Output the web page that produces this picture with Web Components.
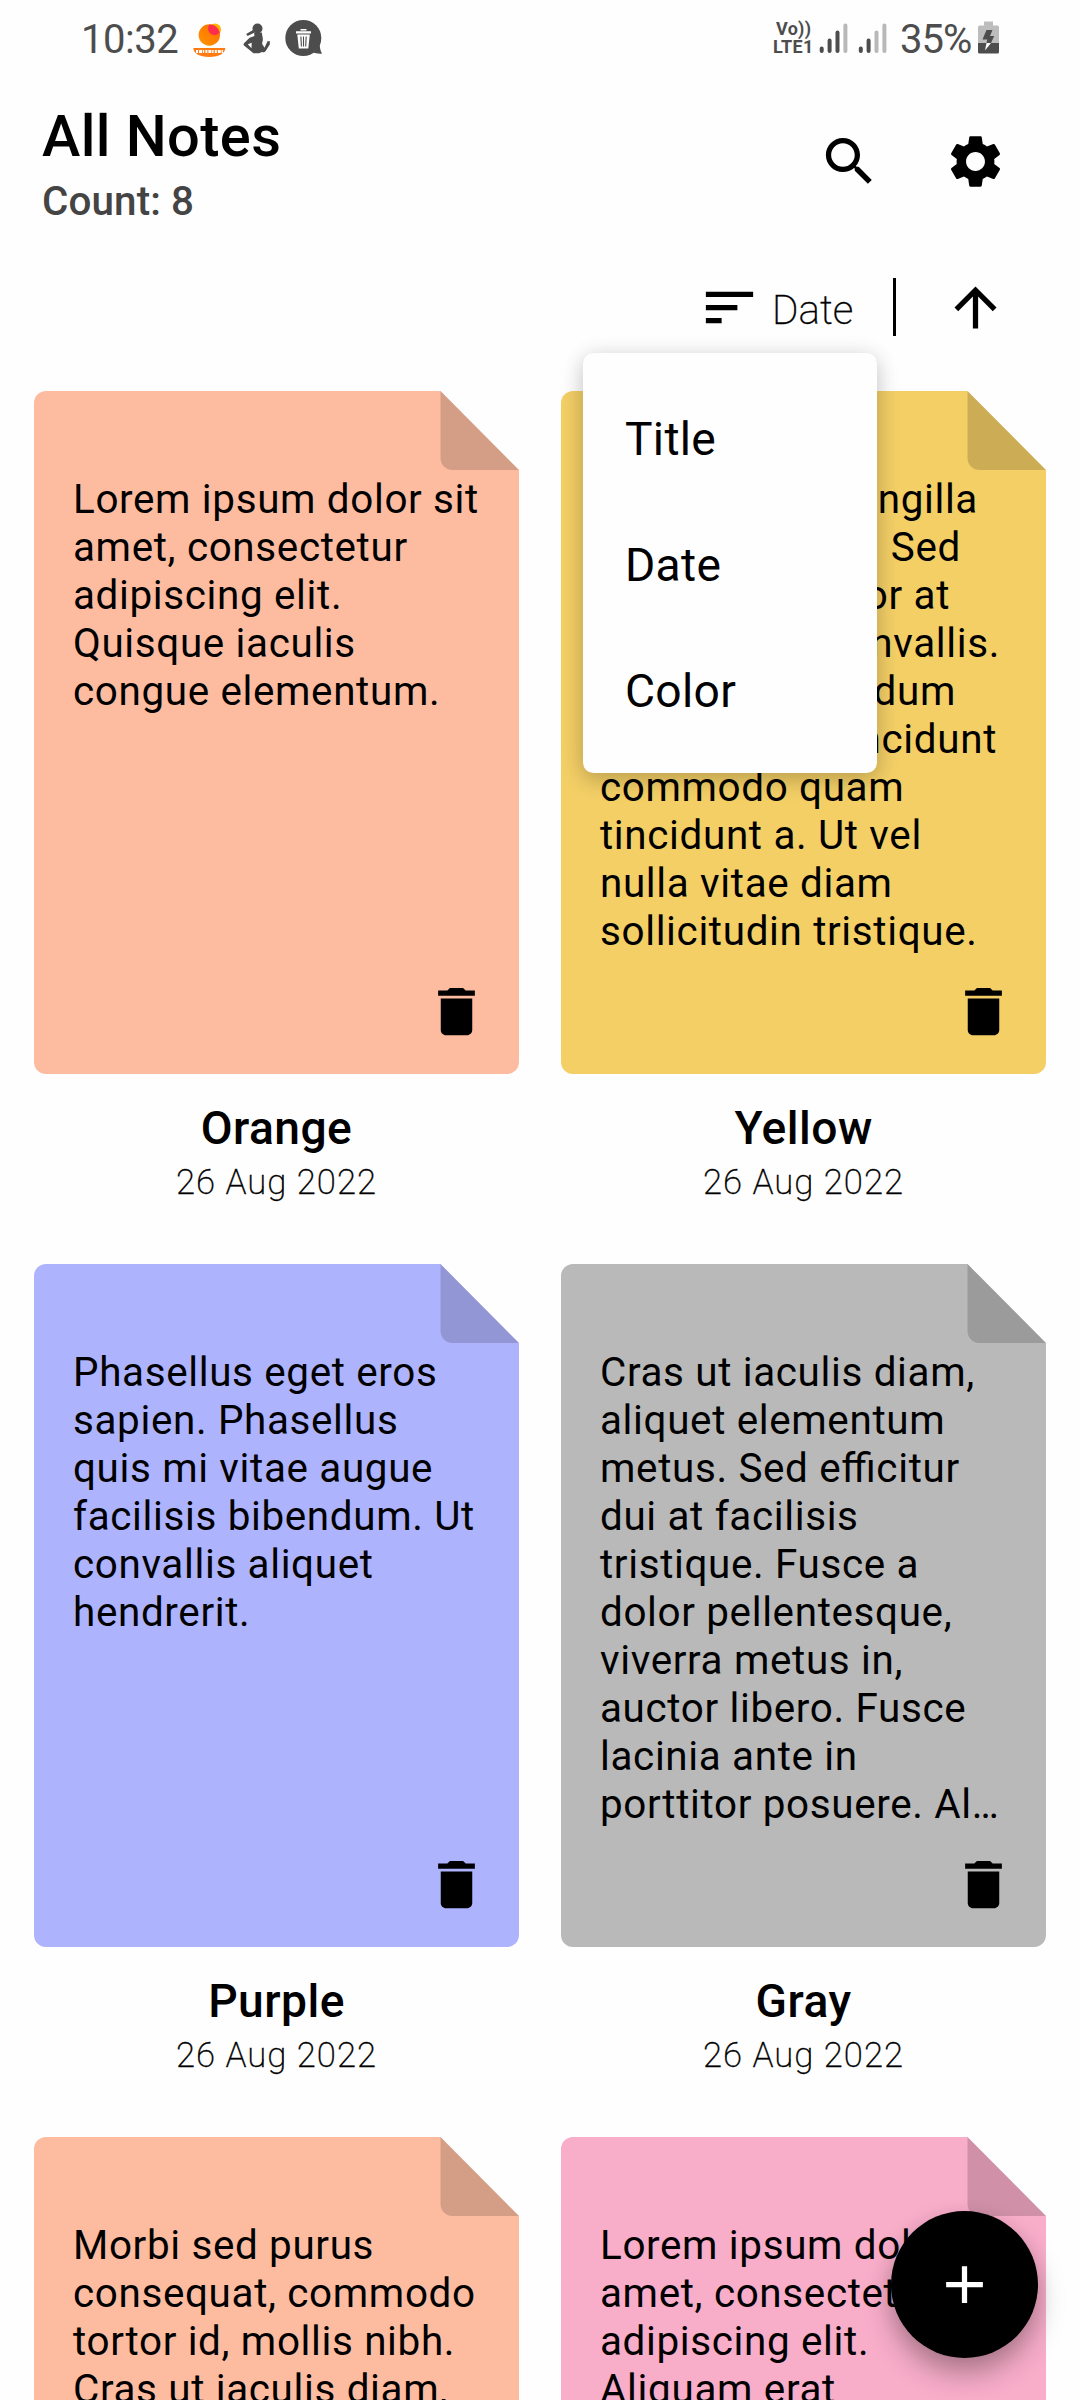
<!DOCTYPE html>
<html lang="en">
<head>
<meta charset="utf-8">
<title>All Notes</title>
<style>
  html, body { margin: 0; height: 2400px; overflow: hidden; background: #fefefe; }
  body { font-family: Roboto, sans-serif; color: #000; }
</style>
</head>
<body>
<notes-app></notes-app>

<script>
const define = (name, html, setup) => {
  const template = document.createElement('template');
  template.innerHTML = html;
  customElements.define(name, class extends HTMLElement {
    connectedCallback() {
      if (this.shadowRoot) return;
      const root = this.attachShadow({ mode: 'open' });
      root.appendChild(template.content.cloneNode(true));
      if (setup) setup(this, root);
    }
  });
};

const ICONS = {
  search: 'M15.5 14h-.79l-.28-.27C15.41 12.59 16 11.11 16 9.5 16 5.91 13.09 3 9.5 3S3 5.91 3 9.5 5.91 16 9.5 16c1.61 0 3.09-.59 4.23-1.57l.27.28v.79l5 4.99L20.49 19l-4.99-5zm-6 0C7.01 14 5 11.99 5 9.5S7.01 5 9.5 5 14 7.01 14 9.5 11.99 14 9.5 14z',
  settings: 'M19.14 12.94c.04-.3.06-.61.06-.94 0-.32-.02-.64-.07-.94l2.03-1.58c.18-.14.23-.41.12-.61l-1.92-3.32c-.12-.22-.37-.29-.59-.22l-2.39.96c-.5-.38-1.03-.7-1.62-.94l-.36-2.54c-.04-.24-.24-.41-.48-.41h-3.84c-.24 0-.43.17-.47.41l-.36 2.54c-.59.24-1.13.57-1.62.94l-2.39-.96c-.22-.08-.47 0-.59.22L2.74 8.87c-.12.21-.08.47.12.61l2.03 1.58c-.05.3-.09.63-.09.94s.02.64.07.94l-2.03 1.58c-.18.14-.23.41-.12.61l1.92 3.32c.12.22.37.29.59.22l2.39-.96c.5.38 1.03.7 1.62.94l.36 2.54c.05.24.24.41.48.41h3.84c.24 0 .44-.17.47-.41l.36-2.54c.59-.24 1.13-.56 1.62-.94l2.39.96c.22.08.47 0 .59-.22l1.92-3.32c.12-.22.07-.47-.12-.61l-2.01-1.58zM12 15.6c-1.98 0-3.6-1.62-3.6-3.6s1.62-3.6 3.6-3.6 3.6 1.62 3.6 3.6-1.62 3.6-3.6 3.6z',
  sort: 'M3 18h6v-2H3v2zM3 6v2h18V6H3zm0 7h12v-2H3v2z',
  up: 'M4 12l1.41 1.41L11 7.83V20h2V7.83l5.58 5.59L20 12l-8-8-8 8z',
  trash: 'M6 19c0 1.1.9 2 2 2h8c1.1 0 2-.9 2-2V7H6v12zM19 4h-3.5l-1-1h-5l-1 1H5v2h14V4z',
  plus: 'M19 13h-6v6h-2v-6H5v-2h6V5h2v6h6v2z'
};

define('md-icon', `
  <style>:host{display:block;width:63px;height:63px;flex:none} svg{display:block;width:100%;height:100%;fill:currentColor}</style>
  <svg viewBox="0 0 24 24"><path/></svg>`,
  (el, root) => root.querySelector('path').setAttribute('d', ICONS[el.getAttribute('name')]));

define('status-bar', `
  <style>
    :host{display:flex;box-sizing:border-box;height:80px;padding:0 80px 0 81px;justify-content:space-between;color:#4d4d4d;font-size:40px;line-height:48px}
    .side{display:flex;padding-top:16px;height:48px}
    svg{display:block;flex:none;margin-top:-16px}
    .time{width:109px;letter-spacing:-.5px}
    .pct{letter-spacing:-1px;margin-left:-1px;width:72px;white-space:nowrap}
    .lte{font:700 18px/18px Roboto,sans-serif;padding-top:4px;width:46px;letter-spacing:.3px}
    .lte div{white-space:nowrap}
    .vo{padding-left:3px}
  </style>
  <div class="side">
    <span class="time">10:32</span>
    <svg width="136" height="80" viewBox="190 0 136 80">
      <defs><linearGradient id="sun" x1="0" y1="1" x2="1" y2="0"><stop offset="0" stop-color="#ff9500"/><stop offset="1" stop-color="#ff6a00"/></linearGradient></defs>
      <circle cx="215" cy="29.500" r="6" fill="#ffb300"/>
      <circle cx="209.300" cy="35" r="10.700" fill="url(#sun)"/>
      <path d="M209.500 24.400a10.700 10.700 0 0 1 10.300 8.200A6 6 0 0 1 209.500 24.400z" fill="#ff2d4d"/>
      <path d="M193.300 48h32c0 5-6 9-16 9s-16-4-16-9z" fill="#ff7a10"/>
      <path d="M196 51.500h27" stroke="#fff" stroke-width="3" stroke-dasharray="2 1 3 .8 1.4 1.2"/>
      <g fill="#4d4d4d">
        <circle cx="257.500" cy="28.500" r="5"/>
        <path d="M253 30l-6.800 4 1.400 2 7-3.500zM254 32.500h7.800l1 6c.3 2.500-.8 4-.6 5.500l2.300 3.800 3-6.500 2.200-.2.2 3.200-4.200 6.700c-1 1.300-2.400 1.500-3.700 1l-3 1.200h-5.500l-9.500-7.700c-.6-.8-.5-1.500 0-2.200l5.600-5.500 4.900-1.800zM247.800 44.300l3.700 4 .2-5.600z"/>
        <circle cx="303.300" cy="38" r="18"/>
        <path d="M319.500 42c.2 5 .5 8 2.500 11.700-4.500.2-8.500-.5-12-3z"/>
      </g>
      <path d="M296 31.200h15v2.300h-15zM300.500 29h6v1.600h-6zM297.300 34.500h12.500l-1.500 14h-9.500z" fill="#fff"/>
      <path d="M300.900 36.500l.5 10M303.500 36.500v10M306.200 36.500l-.5 10" stroke="#4d4d4d" stroke-width="1.100"/>
    </svg>
  </div>
  <div class="side">
    <div class="lte"><div class="vo">Vo))</div><div>LTE1</div></div>
    <svg width="82" height="80" viewBox="819 0 82 80" fill="none" stroke="#4d4d4d" stroke-width="4" stroke-linecap="round">
      <path d="M821.700 48.500V51M829.600 40.500V51M837.500 32.500V51M860.800 48.500V51M868.600 40.500V51"/>
      <path d="M845.400 25.500V51M876.500 32.500V51M884.400 25.500V51" stroke="#b8b8b8"/>
    </svg>
    <span class="pct">35%</span>
    <svg width="22" height="80" viewBox="978 0 22 80" style="margin-left:6px">
      <path d="M984 21.500h9v4h4.500q1.500 0 1.500 1.500v17h-21V27q0-1.500 1.500-1.500h4.500z" fill="#bdbdbd"/>
      <path d="M978 43h21v9q0 1.500-1.500 1.500h-18q-1.500 0-1.500-1.500z" fill="#4d4d4d"/>
      <path d="M986.500 30h6l-2.500 6h4.200l-3.200 7h-4.500l.7-3.500h-4.700z" fill="#4d4d4d"/>
      <path d="M986.500 43h4.500l-6 7.500z" fill="#fff"/>
    </svg>
  </div>`);

define('app-header', `
  <style>
    :host{display:flex;box-sizing:border-box;height:180px;padding:22px 73px 0 42px;justify-content:space-between}
    h1{margin:0;font:500 57.750px/68px Roboto,sans-serif;letter-spacing:.4px}
    .count{margin-top:8px;font:500 40.400px/48px Roboto,sans-serif;letter-spacing:.1px;color:#444}
    .actions{display:flex;gap:63px;padding-top:28px}
  </style>
  <div><h1><slot></slot></h1><div class="count"><slot name="count"></slot></div></div>
  <div class="actions"><md-icon name="search"></md-icon><md-icon name="settings"></md-icon></div>`);

define('sort-bar', `
  <style>
    :host{display:flex;box-sizing:border-box;height:131px;padding:16px 73px 0 0;justify-content:flex-end;align-items:flex-start}
    .label{font:200 40.400px/48px Roboto,sans-serif;-webkit-text-stroke:.3px #000;margin:11px 0 0 11px;width:121px}
    .rule{width:3px;height:58px;margin-top:2px;background:#000}
    .up{margin-left:48px}
  </style>
  <md-icon name="sort"></md-icon><span class="label"><slot></slot></span>
  <div class="rule"></div><md-icon class="up" name="up"></md-icon>`);

define('note-card', `
  <style>
    :host{display:block;height:873px;text-align:center}
    .sheet{position:relative;box-sizing:border-box;width:485px;height:683px;padding:85px 0 0 39px;text-align:left}
    .paper{position:absolute;inset:0;width:485px;height:683px;display:block}
    .text{position:relative;font-size:40.400px;line-height:48px;letter-spacing:.65px;font-feature-settings:"liga" 1;white-space:nowrap}
    .text div{height:48px}
    md-icon{position:absolute;right:31px;bottom:31px}
    .title{margin-top:26px;font:500 46.200px/56px Roboto,sans-serif;letter-spacing:.45px}
    .date{margin-top:5px;font:200 34.650px/42px Roboto,sans-serif;-webkit-text-stroke:.3px #000;letter-spacing:1px}
  </style>
  <div class="sheet">
    <svg class="paper" viewBox="0 0 485 683">
      <path class="bg" d="M12 0H406.500L485 79V671a12 12 0 0 1-12 12H12a12 12 0 0 1-12-12V12A12 12 0 0 1 12 0z"/>
      <path d="M406.500 0V67a12 12 0 0 0 12 12H485z" fill="#000" fill-opacity=".16"/>
    </svg>
    <div class="text"></div>
    <md-icon name="trash"></md-icon>
  </div>
  <div class="title"></div><div class="date"></div>`,
  (el, root) => {
    const note = el.note;
    root.querySelector('.bg').setAttribute('fill', note.color);
    const text = root.querySelector('.text');
    note.lines.forEach(line => {
      const row = document.createElement('div');
      // A [text, width] pair is a line set flush to the given measure.
      if (Array.isArray(line)) {
        row.textContent = line[0];
        row.style.cssText = `width:${line[1]}px;text-align:right`;
      } else row.textContent = line;
      text.appendChild(row);
    });
    if (note.title) {
      root.querySelector('.title').textContent = note.title;
      root.querySelector('.date').textContent = '26 Aug 2022';
    }
  });

const NOTES = [
  { title: 'Orange', color: '#fdbca0', lines: ['Lorem ipsum dolor sit', 'amet, consectetur', 'adipiscing elit.', 'Quisque iaculis', 'congue elementum.'] },
  { title: 'Yellow', color: '#f3cf66', lines: [['fringilla', 378], ['Sed', 361], ['tempor at', 350], ['convallis.', 400], ['interdum', 356], ['tincidunt', 397], 'commodo quam', 'tincidunt a. Ut vel', 'nulla vitae diam', 'sollicitudin tristique.'] },
  { title: 'Purple', color: '#aeb3fe', lines: ['Phasellus eget eros', 'sapien. Phasellus', 'quis mi vitae augue', 'facilisis bibendum. Ut', 'convallis aliquet', 'hendrerit.'] },
  { title: 'Gray', color: '#b9b9b9', lines: ['Cras ut iaculis diam,', 'aliquet elementum', 'metus. Sed efficitur', 'dui at facilisis', 'tristique. Fusce a', 'dolor pellentesque,', 'viverra metus in,', 'auctor libero. Fusce', 'lacinia ante in', 'porttitor posuere. Al…'] },
  { title: '', color: '#fdbca0', lines: ['Morbi sed purus', 'consequat, commodo', 'tortor id, mollis nibh.', 'Cras ut iaculis diam,'] },
  { title: '', color: '#f8adc9', lines: ['Lorem ipsum dolor sit', 'amet, consectetur', 'adipiscing elit.', 'Aliquam erat'] }
];

define('note-grid', `
  <style>:host{display:grid;grid-template-columns:485px 485px;column-gap:42px;padding-left:34px;height:2009px;overflow:hidden}</style>`,
  (el, root) => NOTES.forEach(note => {
    const card = document.createElement('note-card');
    card.note = note;
    root.appendChild(card);
  }));

define('sort-menu', `
  <style>
    :host{display:block;position:absolute;left:583px;top:353px;box-sizing:border-box;width:294px;height:420px;padding:21px 0;background:#fefefe;border-radius:10.500px;box-shadow:0 7px 22px rgba(0,0,0,.2),0 0 24px rgba(0,0,0,.06)}
    ::slotted(div){box-sizing:border-box;height:126px;padding:5px 42px 0;font-size:46.200px;line-height:121px;letter-spacing:.3px}
  </style>
  <slot></slot>`);

define('add-button', `
  <style>
    :host{display:flex;position:absolute;left:891px;top:2211px;width:147px;height:147px;border-radius:50%;align-items:center;justify-content:center;background:#000;color:#fff;box-shadow:0 16px 28px rgba(0,0,0,.28),0 4px 18px rgba(0,0,0,.08)}
  </style>
  <md-icon name="plus"></md-icon>`);

define('notes-app', `
  <style>:host{display:block;position:relative;width:1080px;height:2400px;overflow:hidden;background:#fefefe}</style>
  <status-bar></status-bar>
  <app-header>All Notes<span slot="count">Count: 8</span></app-header>
  <sort-bar>Date</sort-bar>
  <note-grid></note-grid>
  <sort-menu><div>Title</div><div>Date</div><div>Color</div></sort-menu>
  <add-button></add-button>`);
</script>
</body>
</html>
